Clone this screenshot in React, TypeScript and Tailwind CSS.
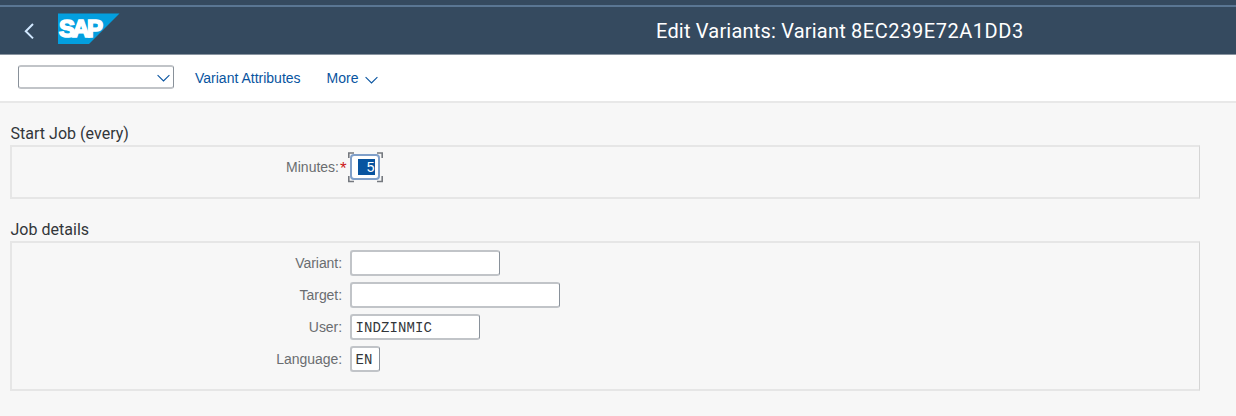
import type { ReactNode } from "react";

function SapLogo() {
  return (
    <svg width="62" height="31" viewBox="0 0 62 31" className="block">
      <path d="M0 0.5H61.5L31 31H0Z" fill="#039fdf" />
      <text
        x="0.9"
        y="23.6"
        fill="#fff"
        stroke="#fff"
        strokeWidth="1.7"
        fontFamily="Liberation Sans, sans-serif"
        fontWeight="700"
        fontSize="24"
        letterSpacing="-2.6"
      >
        SAP
      </text>
    </svg>
  );
}

function Chevron() {
  return (
    <svg width="13" height="8" viewBox="0 0 13 8" className="block" fill="none" stroke="#0854a0" strokeWidth="1.1">
      <path d="M0.6 1.2L6.5 6.9L12.4 1.2" />
    </svg>
  );
}

function Group({ title, children, className }: { title: string; children: ReactNode; className: string }) {
  return (
    <section className="ml-[10px] w-[1190px]">
      <h2 className="h-[24px] pt-[3px] pl-[0.5px] font-['Roboto',sans-serif] text-[16px] leading-[20px] tracking-[0.02px] text-[#32363a]">
        {title}
      </h2>
      <div
        className={`flex flex-col border-y-2 border-r border-l-2 border-y-[#e6e6e6] border-r-[#d5d5d5] border-l-[#e6e6e6] ${className}`}
      >
        {children}
      </div>
    </section>
  );
}

function Label({ children }: { children: ReactNode }) {
  return (
    <span className="w-[330px] text-right font-['Liberation_Sans',sans-serif] text-[14px] leading-[27px] tracking-[-0.06px] text-[#6a6d70]">
      {children}
    </span>
  );
}

function Row({ label, value, width }: { label: string; value?: string; width: string }) {
  return (
    <div className="flex h-[26px]">
      <Label>{label}</Label>
      <div
        className={`ml-[8px] h-[26px] rounded-[3px] border-y-2 border-r border-l-2 border-y-[#c1c4c8] border-r-[#89919a] border-l-[#c1c4c8] bg-white pl-[3.5px] font-['Liberation_Mono',monospace] text-[14px] leading-[25px] tracking-[0.1px] text-[#32363a] ${width}`}
      >
        {value}
      </div>
    </div>
  );
}

export default function App() {
  return (
    <div className="h-[416px] w-[1236px] overflow-hidden bg-[#f7f7f7]">
      <header className="h-[55px] border-b border-[#8994a0] bg-[#354a5f]">
        <div className="h-[7px] border-b-2 border-[#5a7693]" />
        <div className="flex h-[47px]">
          <svg width="11" height="17" viewBox="0 0 11 17" className="mt-[16px] ml-[24px]" fill="none" stroke="#d1e8ff" strokeWidth="2">
            <path d="M9 1L1.8 8.2L9 15.4" />
          </svg>
          <div className="mt-[6px] ml-[23px]">
            <SapLogo />
          </div>
          <h1 className="mt-[10px] ml-[536px] font-['Roboto',sans-serif] text-[20px] leading-[28px] tracking-[0.2px] whitespace-nowrap text-white">
            Edit Variants: Variant <span className="tracking-[0.55px]">8EC239E72A1DD3</span>
          </h1>
        </div>
      </header>

      <nav className="flex h-[48px] border-b-2 border-[#e8e8e8] bg-white font-['Liberation_Sans',sans-serif] text-[14px] leading-[46px] text-[#0854a0]">
        <div className="mt-[10px] ml-[18px] flex h-[24px] w-[156px] items-start justify-end rounded-[3px] border-x border-y-2 border-x-[#89919a] border-y-[#c1c4c8] pt-[7px] pr-[3px]">
          <Chevron />
        </div>
        <span className="ml-[21px]">Variant Attributes</span>
        <span className="ml-[26px]">More</span>
        <div className="mt-[21px] ml-[7px]">
          <Chevron />
        </div>
      </nav>

      <main className="pt-[18px]">
        <Group title="Start Job (every)" className="h-[54px]">
          <div className="mt-[7px] flex h-[26px]">
            <span className="w-[327px] text-right font-['Liberation_Sans',sans-serif] text-[14px] leading-[27px] text-[#6a6d70]">
              Minutes:
            </span>
            <span className="ml-[1px] w-[7px] font-['Liberation_Sans',sans-serif] text-[17px] leading-[29px] text-[#cc1919]">*</span>
            <div className="relative ml-[3px] h-[26px] w-[30px] rounded-[4px] border-2 border-[#7f9fc9] bg-white pt-[3px] pl-[6px]">
              <div className="h-[16px] w-[17px] bg-[#0854a0] text-right font-['Liberation_Mono',monospace] text-[14px] leading-[18px] text-white">
                5
              </div>
              <svg width="35" height="31" viewBox="0 0 35 31" className="absolute -top-[4px] -left-[4px]" fill="none" stroke="#75797f" strokeWidth="1.6">
                <path d="M0.8 6V1H6M29 1H34.2V6M34.2 24V29.5H29M6 29.5H0.8V24" />
              </svg>
            </div>
          </div>
        </Group>

        <div className="h-[18px]" />

        <Group title="Job details" className="h-[150px] gap-[6px] pt-[7px]">
          <Row label="Variant:" width="w-[150px]" />
          <Row label="Target:" width="w-[210px]" />
          <Row label="User:" value="INDZINMIC" width="w-[130px]" />
          <Row label="Language:" value="EN" width="w-[30px]" />
        </Group>
      </main>
    </div>
  );
}
